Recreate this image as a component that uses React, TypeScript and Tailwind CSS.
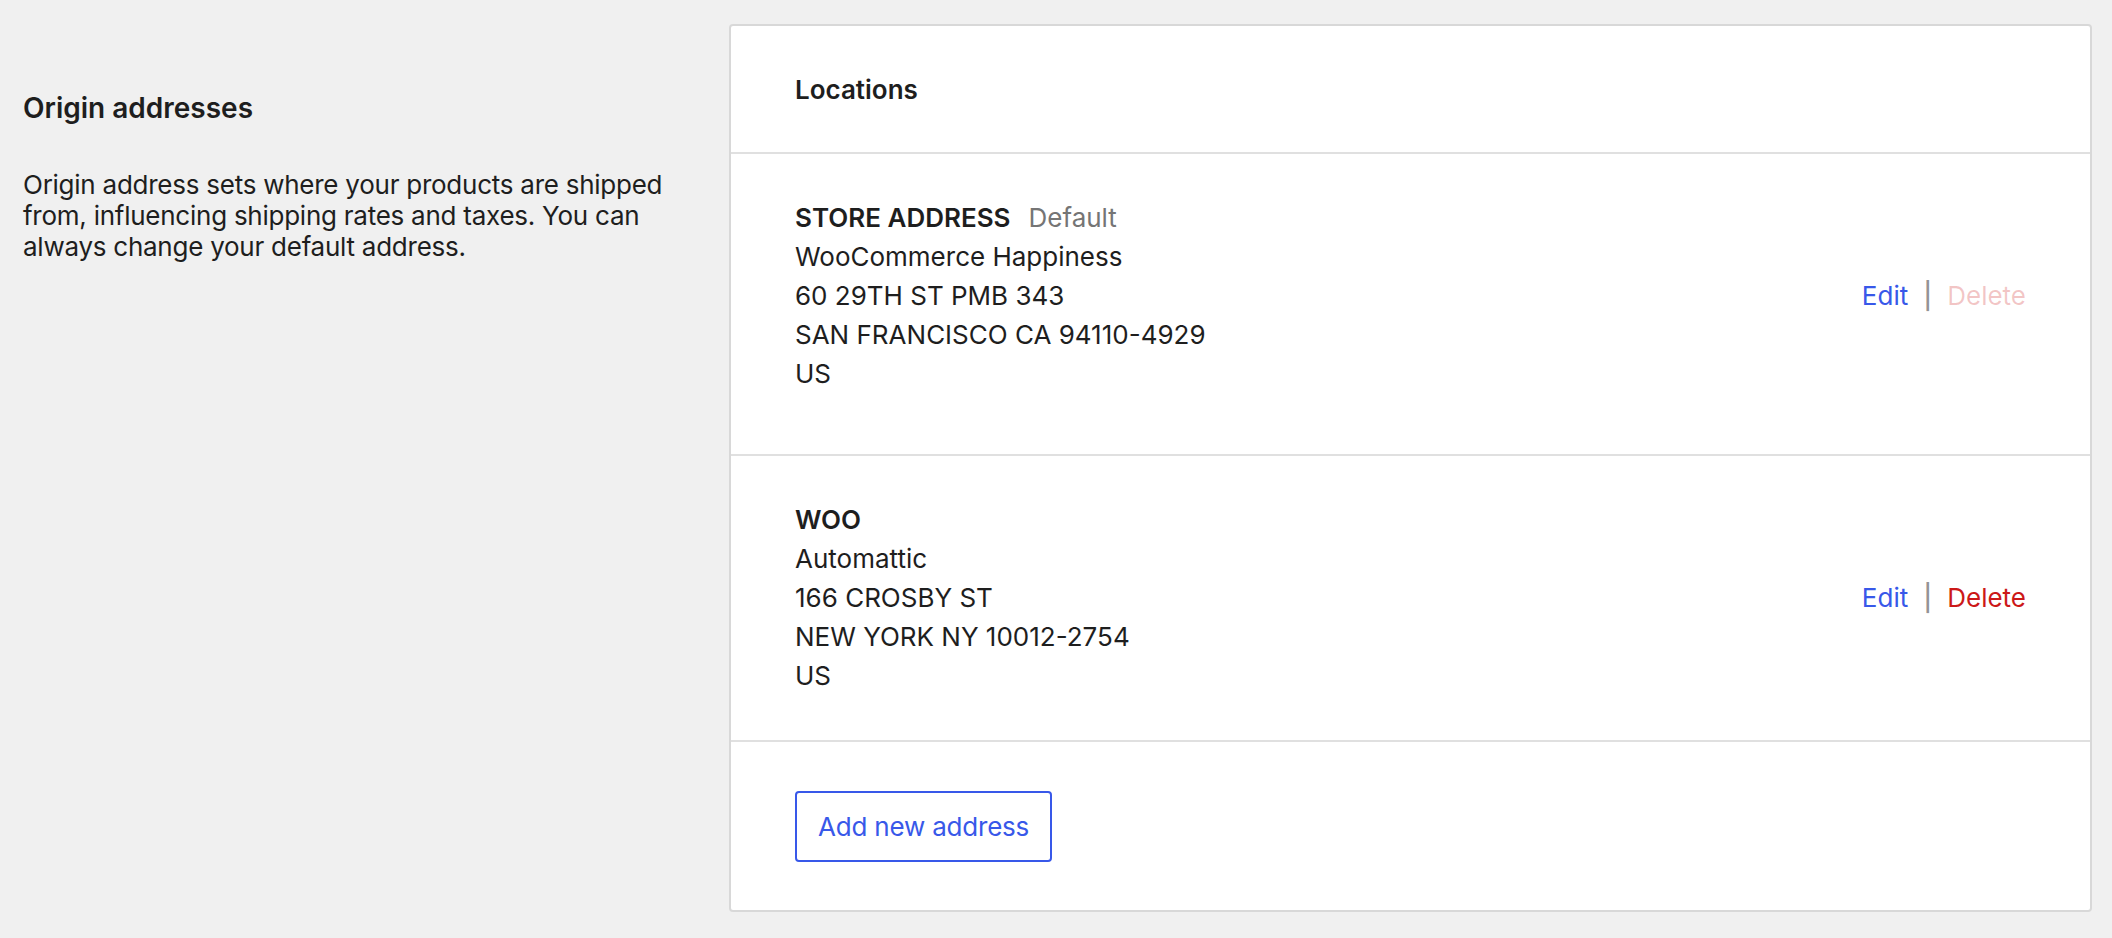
import React from 'react';

type Address = {
  name: string;
  isDefault?: boolean;
  lines: string[];
  canDelete: boolean;
};

const addresses: Address[] = [
  {
    name: 'STORE ADDRESS',
    isDefault: true,
    lines: ['WooCommerce Happiness', '60 29TH ST PMB 343', 'SAN FRANCISCO CA 94110-4929', 'US'],
    canDelete: false,
  },
  {
    name: 'WOO',
    lines: ['Automattic', '166 CROSBY ST', 'NEW YORK NY 10012-2754', 'US'],
    canDelete: true,
  },
];

const AddressRow: React.FC<{ address: Address; extraBottom?: boolean }> = ({ address, extraBottom }) => (
  <div
    className={`flex items-center justify-between border-b-2 border-[#e0e0e0] pl-[64px] pr-[64px] pt-[44px] ${
      extraBottom ? 'pb-[61px]' : 'pb-[45px]'
    }`}
  >
    <div className="text-[26px] leading-[39px] text-[#1e1e1e]">
      <div>
        <span className="font-semibold">{address.name}</span>
        {address.isDefault && <span className="ml-[18px] text-[#757575]">Default</span>}
      </div>
      {address.lines.map((line) => (
        <div key={line}>{line}</div>
      ))}
    </div>
    <div className="flex items-center text-[26px] leading-[39px]">
      <button className="text-[#3858e9]">Edit</button>
      <span className="mx-[15px] font-medium text-[#949494]">|</span>
      <button
        disabled={!address.canDelete}
        className={address.canDelete ? 'text-[#cc1818]' : 'text-[#cc1818]/25'}
      >
        Delete
      </button>
    </div>
  </div>
);

export default function App() {
  return (
    <div
      className="min-h-[938px] bg-[#f0f0f0] pt-[24px] pr-[20px] pl-[23px] text-[#1e1e1e]"
      style={{ fontFamily: 'Inter, "Noto Sans", sans-serif' }}
    >
      <div className="flex">
        <div className="w-[706px] shrink-0 pt-[66px] pr-[40px]">
          <h2 className="text-[28px] leading-[36px] font-semibold">Origin addresses</h2>
          <p className="mt-[43px] text-[26px] leading-[31px] tracking-[-0.25px]">
            Origin address sets where your products are shipped from, influencing shipping rates and taxes. You can
            always change your default address.
          </p>
        </div>

        <div className="flex-1 rounded-[4px] border-2 border-[#d8d8d8] bg-white">
          <div className="flex h-[128px] items-center border-b-2 border-[#e0e0e0] pl-[64px]">
            <h3 className="text-[26px] font-semibold">Locations</h3>
          </div>

          {addresses.map((a, i) => (
            <AddressRow key={a.name} address={a} extraBottom={i === 0} />
          ))}

          <div className="pl-[64px] pt-[49px] pb-[48px]">
            <button className="h-[71px] rounded-[4px] border-2 border-[#3858e9] px-[21px] text-[26px] tracking-[-0.2px] text-[#3858e9]">
              Add new address
            </button>
          </div>
        </div>
      </div>
    </div>
  );
}
